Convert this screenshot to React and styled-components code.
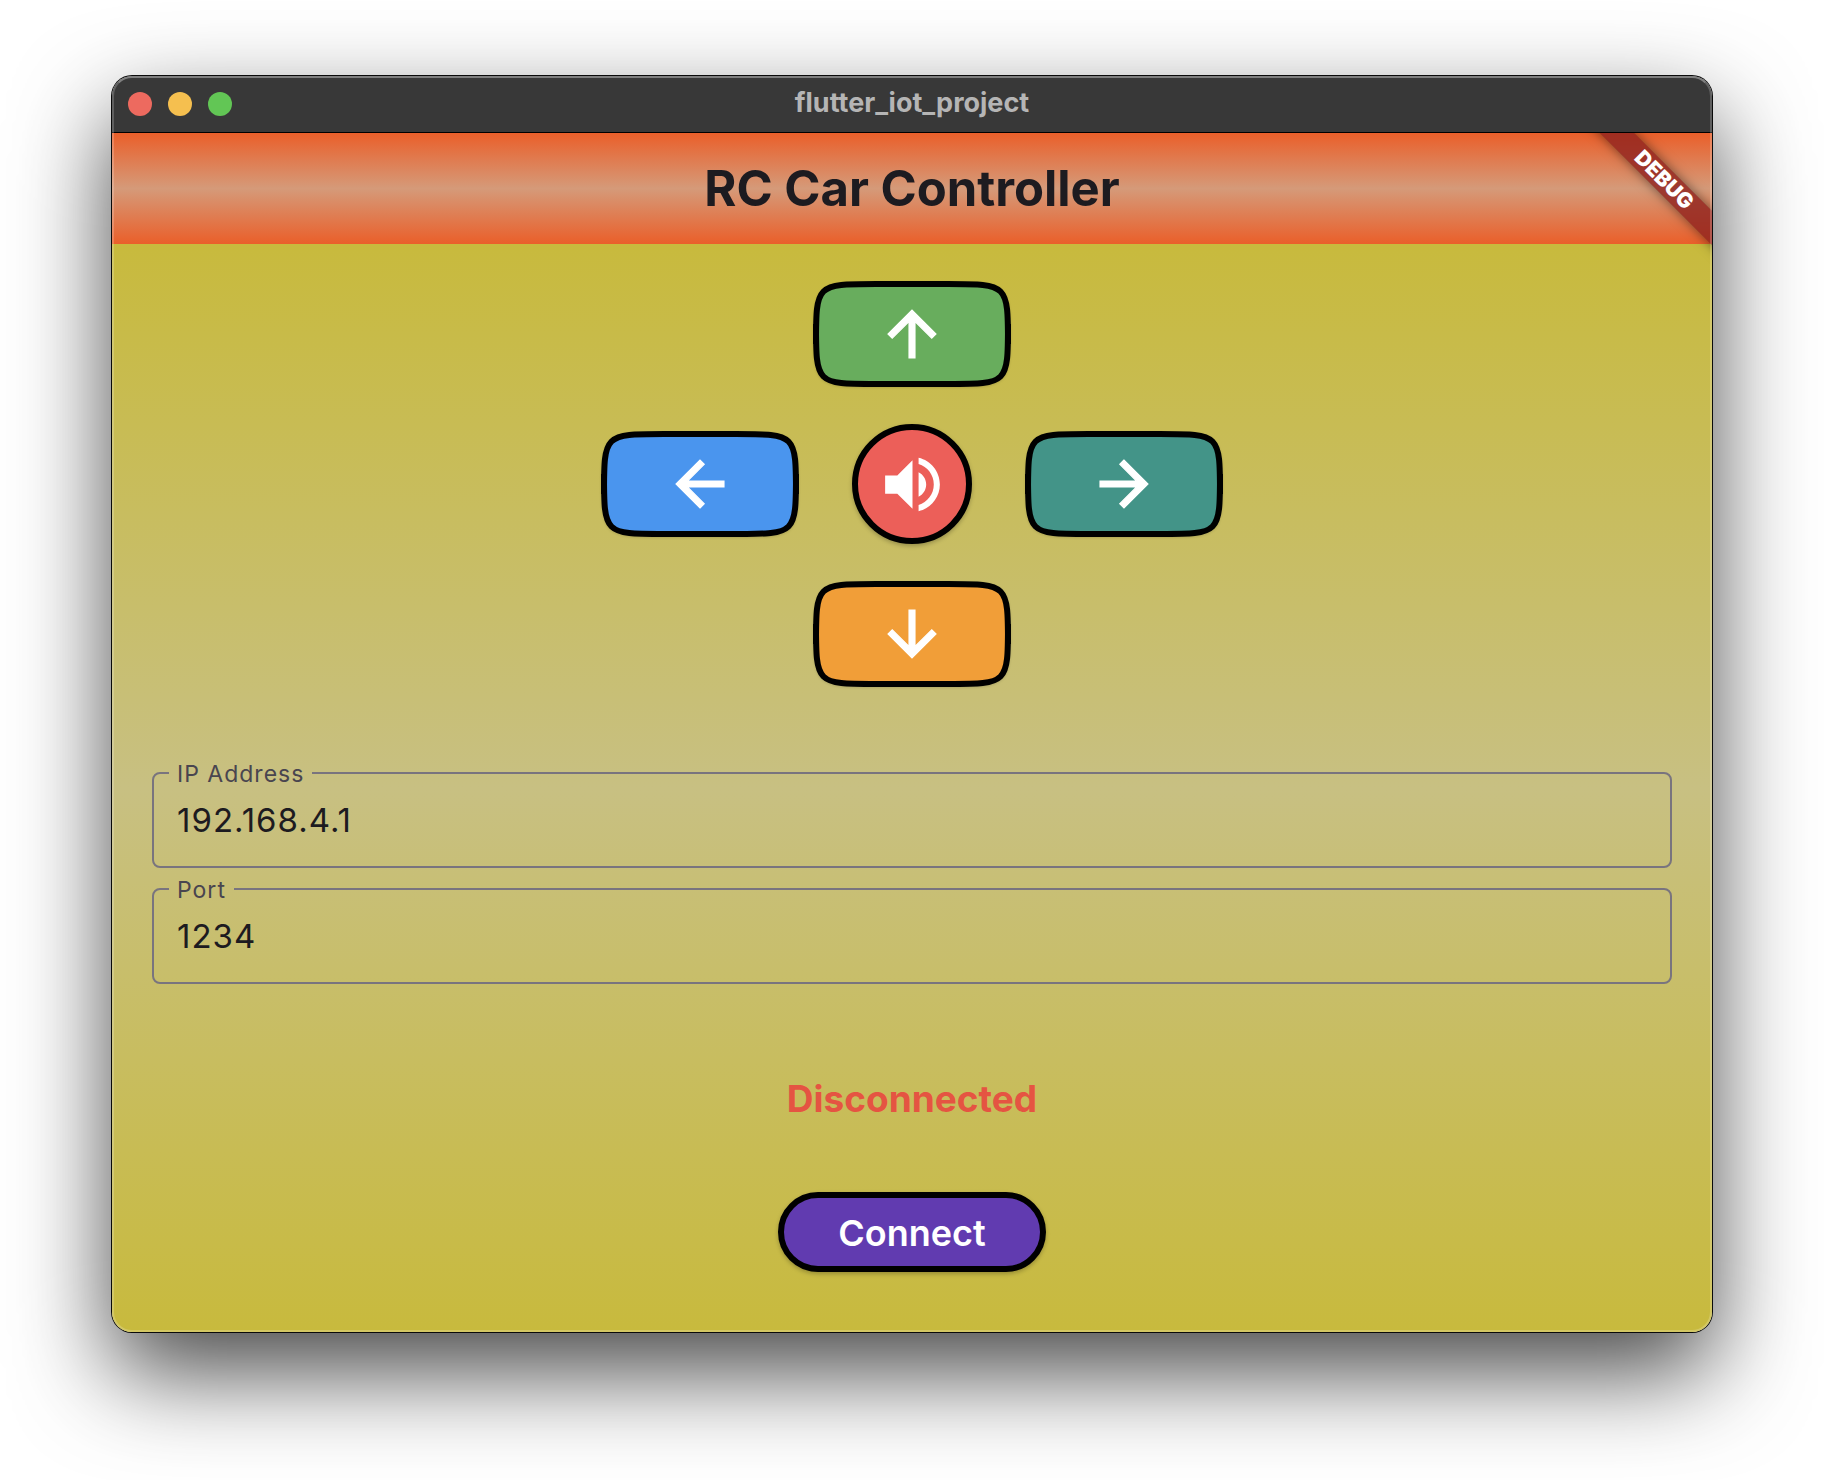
import React, { useId } from "react";
import styled, { createGlobalStyle } from "styled-components";

const GlobalStyle = createGlobalStyle`
  *, *::before, *::after { box-sizing: border-box; }
  body {
    margin: 0;
    background: #fff;
    font-family: Inter, Roboto, "Liberation Sans", sans-serif;
  }
`;

const Desktop = styled.div`
  display: flex;
  min-height: 100vh;
  padding: 76px 112px 148px;
`;

const Window = styled.div`
  position: relative;
  flex: 1;
  display: flex;
  flex-direction: column;
  border-radius: 20px;
  overflow: hidden;
  box-shadow: 0 0 0 1px #0a0a0a, 0 40px 96px rgba(0, 0, 0, 0.72);

  &::after {
    content: "";
    position: absolute;
    inset: 0;
    border-radius: 20px;
    border: 2px solid rgba(255, 255, 255, 0.2);
    border-top-color: rgba(255, 255, 255, 0.36);
    pointer-events: none;
  }
`;

const TitleBar = styled.header`
  display: grid;
  grid-template-columns: 1fr auto 1fr;
  align-items: center;
  height: 57px;
  padding: 0 16px;
  background: #383838;
  border-bottom: 1px solid #000;
`;

const Lights = styled.div`
  display: flex;
  gap: 16px;
`;

const Light = styled.button`
  width: 24px;
  height: 24px;
  padding: 0;
  border: 0;
  border-radius: 50%;
  background: ${(p) => p.$color};
`;

const WindowTitle = styled.div`
  font-size: 27px;
  line-height: 32px;
  padding-bottom: 2px;
  font-weight: 700;
  color: #b5b5b5;
`;

const Content = styled.div`
  position: relative;
  flex: 1;
  display: flex;
  flex-direction: column;
  overflow: hidden;
`;

const AppBar = styled.div`
  display: flex;
  align-items: center;
  justify-content: center;
  height: 111px;
  background: linear-gradient(#ea5f2a, #d59a79 50%, #ea5f2a);
`;

const AppTitle = styled.h1`
  margin: 0;
  font-size: 49px;
  line-height: 60px;
  font-weight: 700;
  color: #1d1b20;
`;

const Ribbon = styled.div`
  position: absolute;
  top: 35px;
  right: -52px;
  width: 200px;
  height: 24px;
  transform: rotate(45deg);
  background: rgba(142, 34, 30, 0.8);
  box-shadow: 0 0 12px rgba(0, 0, 0, 0.5);
  color: #fff;
  font-size: 21px;
  line-height: 24px;
  font-weight: 900;
  text-align: center;
`;

const Body = styled.main`
  flex: 1;
  display: flex;
  flex-direction: column;
  align-items: center;
  padding: 40px 40px 60px;
  background: linear-gradient(#c8ba3d, #c8c082 50%, #c8ba3d);
`;

const Pad = styled.div`
  display: flex;
  flex-direction: column;
  align-items: center;
  gap: 40px;
`;

const PadRow = styled.div`
  display: flex;
  align-items: center;
  gap: 56px;
`;

const PadButton = styled.button`
  display: block;
  width: 192px;
  height: 100px;
  padding: 0;
  border: 0;
  background: none;

  svg {
    display: block;
    overflow: visible;
    filter: drop-shadow(0 1px 1px rgba(0, 0, 0, 0.12));
  }
`;

const HornButton = styled.button`
  display: flex;
  align-items: center;
  justify-content: center;
  width: 120px;
  height: 120px;
  padding: 0;
  border: 6px solid #000;
  border-radius: 50%;
  background: #ec5f59;
  box-shadow: 0 2px 4px rgba(0, 0, 0, 0.25);

  svg {
    flex: none;
  }
`;

const Fields = styled.form`
  align-self: stretch;
  display: flex;
  flex-direction: column;
  gap: 9px;
  margin-top: 77px;
`;

const Outline = styled.fieldset`
  margin: 0;
  min-width: 0;
  padding: 0 15px 9px;
  border: 2px solid #79747e;
  border-radius: 8px;
`;

const Legend = styled.legend`
  height: 24px;
  padding: 0 8px;
  font-size: 23px;
  line-height: 26px;
  letter-spacing: 1px;
  color: #49454f;
`;

const Input = styled.input`
  display: block;
  width: 100%;
  height: 72px;
  padding: 0 8px 2px;
  border: 0;
  outline: 0;
  background: transparent;
  font-family: inherit;
  font-size: 33px;
  letter-spacing: 1px;
  color: #1d1b20;
`;

const Status = styled.p`
  margin: 93px 0 71px;
  font-size: 37px;
  line-height: 44px;
  font-weight: 700;
  color: #e55442;
`;

const ConnectButton = styled.button`
  height: 80px;
  min-width: 268px;
  padding: 2px 48px 0;
  border: 6px solid #000;
  border-radius: 40px;
  background: #613bb0;
  box-shadow: 0 2px 4px rgba(0, 0, 0, 0.25);
  font-family: inherit;
  font-size: 36px;
  line-height: 44px;
  font-weight: 600;
  color: #fff;
`;

const PAD_SHAPE =
  "M0 60C0 0 0 0 60 0L132 0C192 0 192 0 192 60L192 40C192 100 192 100 132 100L60 100C0 100 0 100 0 40Z";

const ARROW = "M4 12l1.41 1.41L11 7.83V20h2V7.83l5.58 5.59L20 12l-8-8-8 8z";

function ArrowButton({ label, color, angle }) {
  return (
    <PadButton type="button" aria-label={label}>
      <svg width="192" height="100" viewBox="0 0 192 100">
        <path d={PAD_SHAPE} fill={color} stroke="#000" strokeWidth="6" />
        <path
          d={ARROW}
          fill="#fff"
          stroke="#fff"
          strokeWidth="0.38"
          transform={`translate(96 50) rotate(${angle}) scale(3) translate(-12 -12)`}
        />
      </svg>
    </PadButton>
  );
}

function Field({ label, value }) {
  const id = useId();
  return (
    <Outline>
      <Legend>
        <label htmlFor={id}>{label}</label>
      </Legend>
      <Input id={id} type="text" defaultValue={value} />
    </Outline>
  );
}

export default function App() {
  return (
    <>
      <GlobalStyle />
      <Desktop>
        <Window>
          <TitleBar>
            <Lights>
              <Light type="button" aria-label="Close" $color="#ed6a5f" />
              <Light type="button" aria-label="Minimize" $color="#f5bf4f" />
              <Light type="button" aria-label="Zoom" $color="#62c655" />
            </Lights>
            <WindowTitle>flutter_iot_project</WindowTitle>
          </TitleBar>
          <Content>
            <AppBar>
              <AppTitle>RC Car Controller</AppTitle>
            </AppBar>
            <Body>
              <Pad>
                <ArrowButton label="Forward" color="#68ad5d" angle={0} />
                <PadRow>
                  <ArrowButton label="Left" color="#4a95ee" angle={-90} />
                  <HornButton type="button" aria-label="Horn">
                    <svg width="73" height="73" viewBox="0 0 24 24" fill="#fff">
                      <path d="M3 9v6h4l5 5V4L7 9H3zm13.5 3c0-1.77-1.02-3.29-2.5-4.03v8.05c1.48-.73 2.5-2.25 2.5-4.02zM14 3.23v2.06c2.89.86 5 3.54 5 6.71s-2.11 5.85-5 6.71v2.06c4.01-.91 7-4.49 7-8.77s-2.99-7.86-7-8.77z" />
                    </svg>
                  </HornButton>
                  <ArrowButton label="Right" color="#439488" angle={90} />
                </PadRow>
                <ArrowButton label="Backward" color="#f19e38" angle={180} />
              </Pad>
              <Fields>
                <Field label="IP Address" value="192.168.4.1" />
                <Field label="Port" value="1234" />
              </Fields>
              <Status>Disconnected</Status>
              <ConnectButton type="button">Connect</ConnectButton>
            </Body>
            <Ribbon>DEBUG</Ribbon>
          </Content>
        </Window>
      </Desktop>
    </>
  );
}
